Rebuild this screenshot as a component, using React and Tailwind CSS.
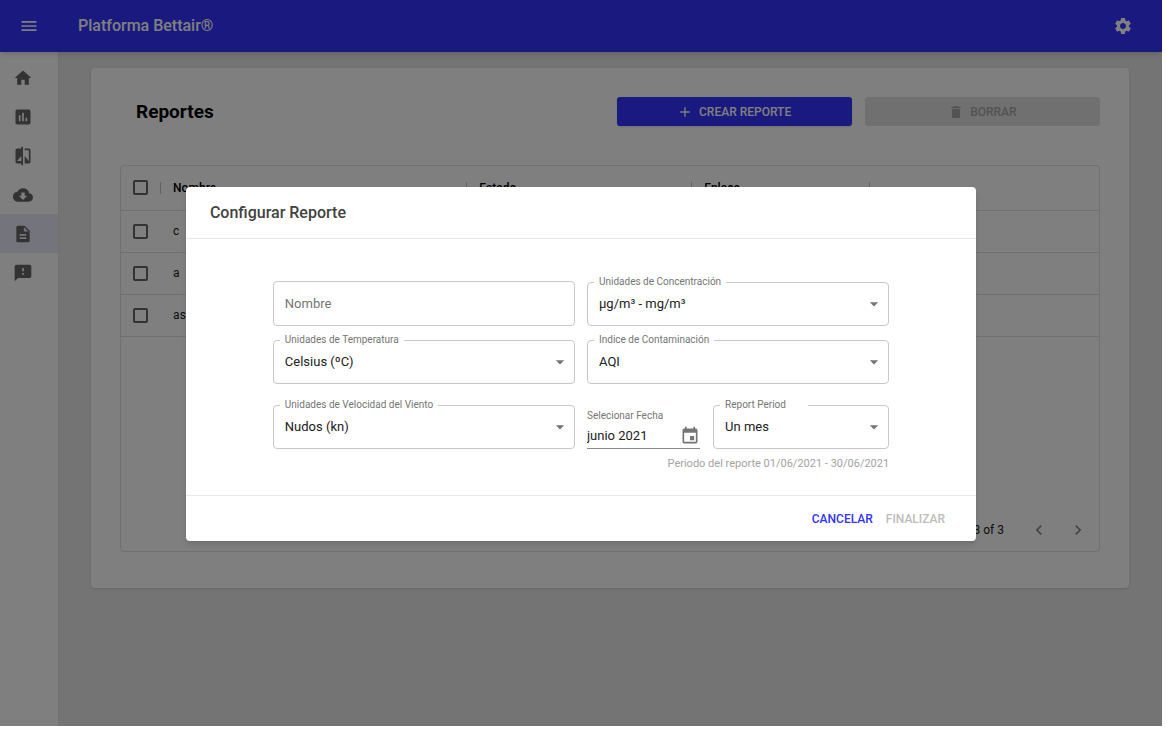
import { useState } from 'react';
import {
  MdAdd,
  MdArrowDropDown,
  MdAssessment,
  MdChevronLeft,
  MdChevronRight,
  MdCloudDownload,
  MdCompare,
  MdDelete,
  MdDescription,
  MdEvent,
  MdFeedback,
  MdHome,
  MdMenu,
  MdSettings
} from 'react-icons/md';

const menuItems = [
  { id: 'inicio', label: 'Inicio', Icon: MdHome },
  { id: 'graficas', label: 'Gráficas', Icon: MdAssessment },
  { id: 'comparar', label: 'Comparar', Icon: MdCompare },
  { id: 'descargas', label: 'Descargas', Icon: MdCloudDownload },
  { id: 'reportes', label: 'Reportes', Icon: MdDescription },
  { id: 'avisos', label: 'Avisos', Icon: MdFeedback }
];

const reportes = ['c', 'a', 'as'];

const Checkbox = ({ label }) => (
  <input
    type="checkbox"
    aria-label={label}
    className="block w-[15px] h-[15px] ml-3 appearance-none border-2 border-[#666666] rounded-xs checked:bg-[#3333ff]"
  />
);

const HeaderCell = ({ children, className }) => (
  <th className={`p-0 text-left font-medium ${className}`}>
    <div className="h-3 border-l border-[#c4c4c4] pl-3 flex items-center">{children}</div>
  </th>
);

const SelectField = ({ id, label, options, legendClass = 'pr-[5px]' }) => (
  <fieldset className="relative min-w-0 h-[49px] border border-[#c8c8c8] rounded">
    <legend className={`ml-[6px] pl-[5px] text-[10px] leading-[10px] text-[#757575] ${legendClass}`}>
      <label htmlFor={id}>{label}</label>
    </legend>
    <select
      id={id}
      className="block w-full h-[34px] pl-[11px] pr-8 appearance-none bg-transparent text-[13px] text-[#212121] outline-none"
    >
      {options.map((option) => (
        <option key={option}>{option}</option>
      ))}
    </select>
    <MdArrowDropDown className="absolute right-1 top-[7px] w-5 h-5 text-[#757575] pointer-events-none" />
  </fieldset>
);

const Sidebar = () => (
  <nav className="w-[59px] shrink-0 bg-white border-r border-[#e0e0e0] pt-[6px]">
    {menuItems.map(({ id, label, Icon }) => (
      <a
        key={id}
        href={`#${id}`}
        aria-label={label}
        className={`flex items-center h-[39px] pl-[13px] text-[#666666] ${id === 'reportes' ? 'bg-[#e8e8fa]' : ''}`}
      >
        <Icon className="w-5 h-5" />
      </a>
    ))}
  </nav>
);

const ReportTable = () => (
  <div className="flex flex-col h-[387px] mt-[39px] border border-[#e0e0e0] rounded text-[12px] text-[#212121]">
    <table className="w-full table-fixed border-collapse">
      <thead>
        <tr className="h-11 border-b border-[#e0e0e0] text-black">
          <th className="w-[4%] p-0"><Checkbox label="Seleccionar todos" /></th>
          <HeaderCell className="w-[31.3%]">Nombre</HeaderCell>
          <HeaderCell className="w-[23%]">Estado</HeaderCell>
          <HeaderCell className="w-[18.2%]">Enlace</HeaderCell>
          <HeaderCell />
        </tr>
      </thead>
      <tbody>
        {reportes.map((nombre) => (
          <tr key={nombre} className="h-[42px] border-b border-[#e0e0e0]">
            <td className="p-0"><Checkbox label={`Seleccionar ${nombre}`} /></td>
            <td className="p-0 pl-[13px]">{nombre}</td>
            <td />
            <td />
            <td />
          </tr>
        ))}
      </tbody>
    </table>
    <div className="flex items-center justify-end h-[42px] mt-auto pr-[11px]">
      <span className="mr-[25px]">1-3 of 3</span>
      <button type="button" aria-label="Página anterior" className="mr-[19px] text-[#8a8a8a]">
        <MdChevronLeft className="w-5 h-5" />
      </button>
      <button type="button" aria-label="Página siguiente" className="text-[#8a8a8a]">
        <MdChevronRight className="w-5 h-5" />
      </button>
    </div>
  </div>
);

const ReportDialog = () => {
  const [nombre, setNombre] = useState('');
  const [fecha, setFecha] = useState('junio 2021');

  return (
    <div className="absolute inset-0 z-10 flex items-center justify-center pt-[2px] bg-black/50">
      <form
        role="dialog"
        aria-labelledby="dialog-title"
        onSubmit={(e) => e.preventDefault()}
        className="w-[68%] bg-white rounded shadow-md"
      >
        <h2 id="dialog-title" className="px-6 pt-[14px] pb-[13px] text-[16px] leading-6 font-medium text-[#424242] border-b border-[#e8e8e8]">
          Configurar Reporte
        </h2>

        <div className="px-[11%] pt-[38px] pb-[23px]">
          <div className="grid grid-cols-2 gap-x-3 gap-y-[9px]">
            <div className="pt-1">
              <input
                type="text"
                aria-label="Nombre"
                placeholder="Nombre"
                value={nombre}
                onChange={(e) => setNombre(e.target.value)}
                className="block w-full h-[45px] px-[11px] border border-[#c8c8c8] rounded text-[13px] placeholder:text-[#757575] outline-none"
              />
            </div>
            <SelectField id="concentracion" label="Unidades de Concentración" options={['µg/m³ - mg/m³', 'ppb - ppm']} />
            <SelectField id="temperatura" label="Unidades de Temperatura" options={['Celsius (ºC)', 'Fahrenheit (ºF)']} />
            <SelectField id="indice" label="Indice de Contaminación" options={['AQI', 'CAQI']} />
          </div>

          <div className="grid grid-cols-2 gap-x-3 mt-4">
            <SelectField id="viento" label="Unidades de Velocidad del Viento" options={['Nudos (kn)', 'm/s']} />
            <div className="flex gap-[13px]">
              <div className="flex-[113] min-w-0 pt-[11px]">
                <label htmlFor="fecha" className="block text-[10px] leading-[10px] text-[#757575]">
                  Selecionar Fecha
                </label>
                <div className="flex items-center justify-between h-7 pt-[3px] border-b border-[#8a8a8a]">
                  <input
                    id="fecha"
                    type="text"
                    value={fecha}
                    onChange={(e) => setFecha(e.target.value)}
                    className="min-w-0 w-20 text-[13px] text-[#212121] outline-none"
                  />
                  <button type="button" aria-label="Abrir calendario" className="text-[#757575]">
                    <MdEvent className="w-5 h-5" />
                  </button>
                </div>
              </div>
              <div className="flex-[176] min-w-0">
                <SelectField id="periodo" label="Report Period" options={['Un mes', 'Una semana']} legendClass="pr-[22px]" />
              </div>
            </div>
          </div>
          <p className="mt-[7px] text-[11px] leading-4 text-right text-[#a3a3a3]">
            Periodo del reporte 01/06/2021 - 30/06/2021
          </p>
        </div>

        <div className="flex items-center justify-end gap-[13px] h-[46px] pr-[31px] border-t border-[#e8e8e8] text-[12px] font-medium">
          <button type="button" className="text-[#3333ff]">CANCELAR</button>
          <button type="submit" disabled className="text-[#bdbdbd]">FINALIZAR</button>
        </div>
      </form>
    </div>
  );
};

export default function App() {
  return (
    <div className="h-screen pr-[5px] pb-1 bg-white font-[Roboto,sans-serif]">
      <div className="relative flex flex-col h-full overflow-hidden">
        <header className="relative flex items-center h-[52px] shrink-0 pl-[19px] pr-[29px] bg-[#3333ff] text-white shadow-md">
          <button type="button" aria-label="Menú">
            <MdMenu className="w-5 h-5" />
          </button>
          <h1 className="ml-[39px] text-[16px] font-medium">Platforma Bettair®</h1>
          <button type="button" aria-label="Ajustes" className="ml-auto">
            <MdSettings className="w-5 h-5" />
          </button>
        </header>

        <div className="flex flex-1 min-h-0">
          <Sidebar />
          <main className="flex-1 min-w-0 bg-[#e8e8e8] pl-8 pr-[33px] pt-4">
            <section className="p-[29px] pb-9 bg-white rounded shadow">
              <div className="grid grid-cols-2 gap-[13px] items-center">
                <h2 className="pl-4 text-[19px] leading-[29px] font-bold text-black">Reportes</h2>
                <div className="grid grid-cols-2 gap-[13px] text-[12px] font-medium">
                  <button type="button" className="flex items-center justify-center gap-[6px] h-[29px] rounded-[3px] bg-[#3333ff] text-white shadow">
                    <MdAdd className="w-4 h-4" />
                    CREAR REPORTE
                  </button>
                  <button type="button" disabled className="flex items-center justify-center gap-[6px] h-[29px] rounded-[3px] bg-[#e0e0e0] text-[#a6a6a6]">
                    <MdDelete className="w-4 h-4" />
                    BORRAR
                  </button>
                </div>
              </div>
              <ReportTable />
            </section>
          </main>
        </div>

        <ReportDialog />
      </div>
    </div>
  );
}
